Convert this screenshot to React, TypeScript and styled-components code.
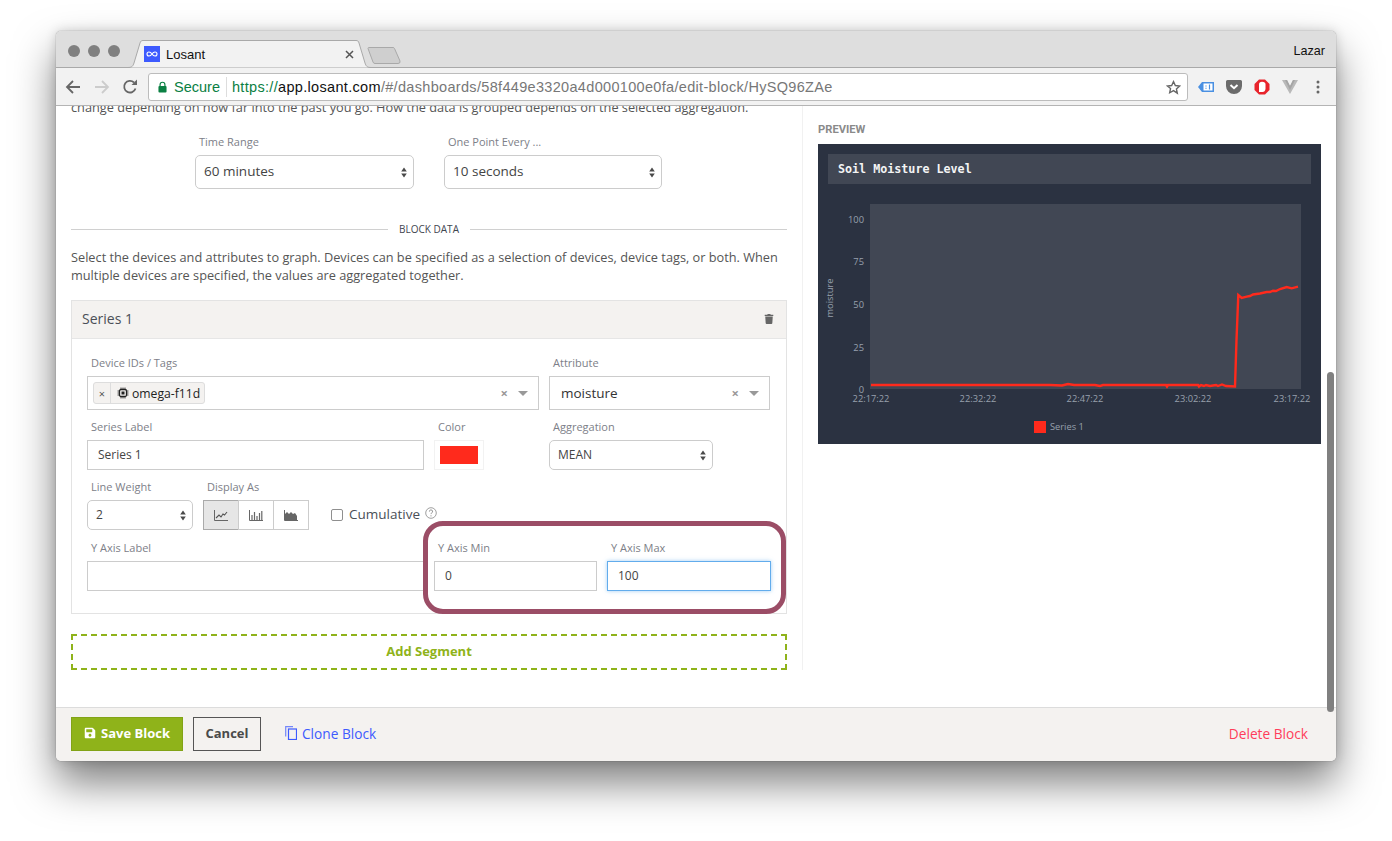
import React from "react";
import styled, { createGlobalStyle } from "styled-components";
import { FaTrash, FaSave } from "react-icons/fa";

const Global = createGlobalStyle`
  html, body { margin: 0; padding: 0; background: #fff; }
  body { font-family: "Open Sans", "Noto Sans", sans-serif; color: #4a4a4a; }
  * { box-sizing: border-box; }
`;

const Desktop = styled.div`
  width: 1392px;
  height: 841px;
  padding: 31px 56px 0;
  overflow: hidden;
  background: #fff;
`;
const Win = styled.div`
  position: relative;
  width: 1280px;
  height: 730px;
  border-radius: 5px;
  display: flex;
  flex-direction: column;
  background: #fff;
  box-shadow: 0 22px 42px rgba(0, 0, 0, 0.5), 0 0 12px rgba(0, 0, 0, 0.16), 0 0 1px rgba(0, 0, 0, 0.6);
`;
const TabBar = styled.div`
  height: 37px;
  flex: none;
  display: flex;
  align-items: flex-end;
  background: #dedede;
  border-radius: 5px 5px 0 0;
  border-bottom: 1px solid #a9a9a9;
  padding-left: 12px;
  position: relative;
`;
const Lights = styled.div`
  display: flex;
  gap: 8px;
  align-self: flex-start;
  margin-top: 14px;
`;
const Light = styled.span`
  width: 12px;
  height: 12px;
  border-radius: 50%;
  background: #808080;
`;
const Tab = styled.div`
  position: relative;
  width: 243px;
  height: 28px;
  margin-left: 8px;
  margin-bottom: -1px;
  display: flex;
  align-items: center;
  padding: 0 0 0 16px;
  font: 13px "Liberation Sans", Arial, sans-serif;
  color: #111;
`;
const TabShape = styled.svg`
  position: absolute;
  left: 0;
  top: 0;
`;
const TabFavicon = styled.svg`
  position: relative;
  margin-right: 6px;
`;
const TabTitle = styled.span`
  position: relative;
  flex: 1;
`;
const TabClose = styled.svg`
  position: relative;
  margin-right: 17px;
`;
const NewTab = styled.svg`
  margin: 0 0 3px -4px;
`;
const UserName = styled.span`
  margin-left: auto;
  align-self: center;
  margin-right: 11px;
  margin-top: 4px;
  font: 12.6px "Liberation Sans", Arial, sans-serif;
  color: #111;
`;
const Toolbar = styled.div`
  height: 38px;
  flex: none;
  display: flex;
  align-items: center;
  background: #f2f2f2;
  border-bottom: 1px solid #b4b4b4;
  padding: 1px 10px 0 9px;
`;
const NavIcon = styled.svg<{ $ml?: number }>`
  flex: none;
  margin-right: 9px;
  margin-left: ${(p) => p.$ml ?? 0}px;
`;
const Omnibox = styled.div`
  width: 1040px;
  height: 28px;
  margin-left: 1px;
  display: flex;
  align-items: center;
  background: #fff;
  border: 1px solid #bcbcbc;
  border-radius: 3px;
  padding: 0 6px 0 9px;
  font: 14.5px "Liberation Sans", Arial, sans-serif;
  color: #777;
  white-space: nowrap;
`;
const Secure = styled.span`
  color: #0b8043;
  margin-left: 7px;
  padding-right: 6px;
  border-right: 1px solid #ddd;
  margin-right: 5px;
  line-height: 20px;
`;
const Url = styled.span`
  letter-spacing: 0.32px;
`;
const Scheme = styled.span`
  color: #0b8043;
`;
const Host = styled.span`
  color: #111;
`;
const Star = styled.svg`
  margin-left: auto;
`;
const ExtRow = styled.div`
  display: flex;
  align-items: center;
  gap: 12px;
  margin-left: 10px;
`;

const Main = styled.div`
  flex: 1;
  min-height: 0;
  display: flex;
  align-items: flex-start;
  overflow: hidden;
`;
const FormCol = styled.div`
  width: 747px;
  flex: none;
  margin-top: -8px;
  padding: 0 15px;
  border-right: 1px solid #f1f1f1;
  font-size: 12.75px;
`;
const Para = styled.p<{ $mt: number }>`
  margin: ${(p) => p.$mt}px 0 0;
  line-height: 18px;
  color: #555;
  font-size: 12.75px;
  font-weight: 500;
  white-space: nowrap;
`;
const Label = styled.div`
  height: 16px;
  line-height: 16px;
  margin-bottom: 5px;
  padding-left: 4px;
  font-size: 11px;
  color: #7d8088;
  font-weight: 500;
  white-space: nowrap;
`;
const TimeRow = styled.div`
  display: flex;
  gap: 30px;
  margin-top: 18px;
  padding-left: 124px;
`;
const Field = styled.div<{ $w: number; $ml?: number }>`
  width: ${(p) => p.$w}px;
  margin-left: ${(p) => p.$ml ?? 0}px;
  flex: none;
`;
const SelectBox = styled.div<{ $h: number; $size: number }>`
  height: ${(p) => p.$h}px;
  display: flex;
  align-items: center;
  justify-content: space-between;
  border: 1px solid #ccc;
  border-radius: 5px;
  padding: 0 5px 0 8px;
  font-size: ${(p) => p.$size}px;
  color: #444;
  background: #fff;
`;
const SelectValue = styled.span`
  padding-bottom: 2px;
`;
const Updown = () => (
  <svg width="8" height="11" viewBox="0 0 8 11">
    <path d="M4 0.5 6.8 4.4H1.2zM4 10.5 1.2 6.6h5.6z" fill="#4a4a4a" />
  </svg>
);
const Divider = styled.div`
  height: 16px;
  margin-top: 32px;
  display: flex;
  align-items: center;
  gap: 11px;
  font-size: 10px;
  color: #3f4650;
  font-weight: 500;
  white-space: nowrap;
  &::before,
  &::after {
    content: "";
    flex: 1;
    height: 1px;
    background: #d0d0d0;
  }
`;
const Card = styled.div`
  position: relative;
  margin-top: 16px;
  border: 1px solid #e3e3e3;
`;
const CardHead = styled.div`
  height: 38px;
  display: flex;
  align-items: center;
  justify-content: space-between;
  padding: 0 12px 2px 10px;
  background: #f4f2f0;
  border-bottom: 1px solid #e6e6e6;
  font-size: 14px;
  font-weight: 500;
  color: #4a4f57;
`;
const CardBody = styled.div`
  padding: 16px 15px 22px;
`;
const Row = styled.div<{ $mt: number }>`
  display: flex;
  margin-top: ${(p) => p.$mt}px;
  align-items: flex-start;
`;
const Combo = styled.div`
  height: 34px;
  display: flex;
  align-items: center;
  border: 1px solid #ccc;
  background: #fff;
  padding: 0 10px 0 5px;
  font-size: 13.5px;
  color: #333;
`;
const Chip = styled.div`
  height: 22px;
  display: flex;
  align-items: center;
  background: #f4f2f0;
  border: 1px solid #ddd;
  border-radius: 3px;
  font-size: 12.2px;
  color: #222;
`;
const ChipX = styled.span`
  width: 17px;
  height: 100%;
  display: flex;
  align-items: center;
  justify-content: center;
  border-right: 1px solid #ddd;
  font-size: 11px;
  color: #555;
`;
const ChipLabel = styled.span`
  display: flex;
  align-items: center;
  gap: 3px;
  padding: 0 4px 0 6px;
`;
const ComboValue = styled.span`
  flex: 1;
  padding-left: 6px;
`;
const ComboClear = styled.span`
  margin-left: auto;
  margin-right: 10px;
  font-size: 13px;
  font-weight: 700;
  color: #999;
  line-height: 1;
`;
const Caret = styled.span`
  width: 0;
  height: 0;
  border-left: 5px solid transparent;
  border-right: 5px solid transparent;
  border-top: 5px solid #999;
`;
const Input = styled.input<{ $focus?: boolean }>`
  display: block;
  width: 100%;
  height: 30px;
  padding: 0 10px 2px;
  font: 500 12px "Open Sans", sans-serif;
  color: #444;
  background: #fff;
  outline: none;
  border: 1px solid ${(p) => (p.$focus ? "#62acec" : "#ccc")};
  box-shadow: ${(p) => (p.$focus ? "0 0 4px rgba(98,172,236,.6)" : "none")};
`;
const SwatchBox = styled.div`
  height: 30px;
  padding: 5px 5px;
  border: 1px solid #f2f2f2;
`;
const Swatch = styled.div`
  height: 18px;
  background: #ff2a1c;
`;
const BtnGroup = styled.div`
  display: flex;
  height: 30px;
`;
const ChartBtn = styled.div<{ $on?: boolean }>`
  width: 36px;
  display: flex;
  align-items: center;
  justify-content: center;
  background: ${(p) => (p.$on ? "#e6e6e6" : "#fff")};
  border: 1px solid ${(p) => (p.$on ? "#aaa" : "#ccc")};
  margin-left: -1px;
  &:first-child {
    margin-left: 0;
  }
`;
const CheckWrap = styled.div`
  margin: 20px 0 0 22px;
  height: 30px;
  display: flex;
  align-items: center;
  font-size: 13.5px;
  color: #4a4f57;
  font-weight: 500;
`;
const CheckBoxMark = styled.span`
  width: 12px;
  height: 12px;
  border: 1px solid #8f8f8f;
  border-radius: 2px;
  margin: 1px 6px 0 0;
  background: #fff;
`;
const HelpIcon = styled.svg`
  margin-left: 5px;
  margin-top: -2px;
`;
const Highlight = styled.div`
  position: absolute;
  left: 351px;
  top: 220px;
  width: 363px;
  height: 93px;
  border: 5px solid #9b4d66;
  border-radius: 20px;
  pointer-events: none;
`;
const AddSegment = styled.div`
  margin-top: 20px;
  height: 36px;
  padding-bottom: 2px;
  display: flex;
  align-items: center;
  justify-content: center;
  border: 2px dashed #8fb31a;
  color: #8fb31a;
  font-size: 13px;
  font-weight: 700;
`;
const PreviewCol = styled.div`
  flex: 1;
  padding: 16px 0 0 15px;
`;
const PreviewLabel = styled.div`
  height: 16px;
  line-height: 16px;
  margin-bottom: 6px;
  font: 700 11.2px/16px "Roboto", sans-serif;
  color: #8a8a8a;
`;
const Tile = styled.div`
  width: 503px;
  height: 300px;
  background: #2b3241;
  padding-top: 10px;
  display: flex;
  flex-direction: column;
`;
const TileTitle = styled.div`
  height: 30px;
  margin: 0 10px;
  padding: 0 0 1px 10px;
  display: flex;
  align-items: center;
  background: #414754;
  font: 700 11.7px "DejaVu Sans Mono", "Liberation Mono", monospace;
  color: #f4f4f4;
`;
const Chart = styled.svg`
  display: block;
`;
const ChartText = styled.text`
  font: 9.3px "Open Sans", sans-serif;
  fill: #98a0ad;
`;
const Footer = styled.div`
  height: 54px;
  flex: none;
  display: flex;
  align-items: flex-start;
  padding: 9px 28px 0 15px;
  background: #f4f2f0;
  border-top: 1px solid #dcdcdc;
  border-radius: 0 0 5px 5px;
`;
const SaveBtn = styled.div`
  width: 112px;
  height: 34px;
  display: flex;
  align-items: center;
  justify-content: center;
  gap: 5px;
  padding-bottom: 2px;
  background: #8fb31a;
  border: 1px solid #82a317;
  color: #fff;
  font-size: 13px;
  font-weight: 700;
`;
const CancelBtn = styled.div`
  width: 68px;
  height: 34px;
  margin-left: 10px;
  padding-bottom: 2px;
  display: flex;
  align-items: center;
  justify-content: center;
  border: 1px solid #555;
  color: #4a4a4a;
  font-size: 13px;
  font-weight: 700;
`;
const CloneLink = styled.div`
  height: 34px;
  margin-left: 24px;
  padding-bottom: 2px;
  display: flex;
  align-items: center;
  gap: 5px;
  color: #3d5afe;
  font-size: 13.7px;
  font-weight: 500;
`;
const DeleteLink = styled.div`
  height: 34px;
  margin-left: auto;
  padding-bottom: 2px;
  display: flex;
  align-items: center;
  color: #ff3d5a;
  font-size: 13.7px;
  font-weight: 500;
`;
const Scrollbar = styled.div`
  position: absolute;
  right: 2px;
  top: 341px;
  width: 7px;
  height: 340px;
  border-radius: 4px;
  background: #808080;
`;

const linePts =
  "871,385 900,385 950,385 1000,385 1050,385 1062,385.5 1068,384 1074,385 1095,385 1100,386 1103,385 1166,385 1167,386.5 1168,385 1187,385 1198,385 1199,386.5 1201,385 1204,386 1206,385 1210,386 1213,385.5 1216,385 1218,386 1222,384.5 1226,386 1235,386.5 1236.5,340 1238.3,295 1241.7,298 1246.7,296.7 1250,296 1253,294.5 1260,293.5 1266.7,292 1270,292 1273,290.7 1276,291 1280,289 1286.7,287 1291.7,288.3 1298,286.7";

const IconChip = () => (
  <svg width="12" height="12" viewBox="0 0 12 12">
    <rect x="2.5" y="2.5" width="7" height="7" rx="1.5" fill="none" stroke="#222" strokeWidth="1.3" />
    <rect x="4.5" y="4.5" width="3" height="3" fill="#222" />
    <path d="M4 .5v1.5M6 .5v1.5M8 .5v1.5M4 10v1.5M6 10v1.5M8 10v1.5M.5 4H2M.5 6H2M.5 8H2M10 4h1.5M10 6h1.5M10 8h1.5" stroke="#222" strokeWidth=".8" />
  </svg>
);

export default function App() {
  return (
    <>
      <Global />
      <Desktop>
        <Win>
          <TabBar>
            <Lights>
              <Light />
              <Light />
              <Light />
            </Lights>
            <Tab>
              <TabShape width="243" height="28" viewBox="0 0 243 28">
                <path d="M0 27.5C4 27.5 5 26 6 23L12 3C12.6 1 13.5.5 15 .5H228C229.6.5 230.5 1 231 3L237 23C238 26 239 27.5 243 27.5" fill="#f2f2f2" stroke="#a9a9a9" />
              </TabShape>
              <TabFavicon width="16" height="16" viewBox="0 0 16 16">
                <rect width="16" height="16" fill="#3d5afe" />
                <path d="M8 8C7 6.5 6 6 5 6a2 2 0 0 0 0 4c1 0 2-.5 3-2s2-2 3-2a2 2 0 0 1 0 4c-1 0-2-.5-3-2z" fill="none" stroke="#fff" strokeWidth="1.1" />
              </TabFavicon>
              <TabTitle>Losant</TabTitle>
              <TabClose width="9" height="9" viewBox="0 0 9 9">
                <path d="M1 1l7 7M8 1L1 8" stroke="#555" strokeWidth="1.5" />
              </TabClose>
            </Tab>
            <NewTab width="34" height="17" viewBox="0 0 34 17">
              <path d="M1 1.5Q1 .5 2 .5H26Q27 .5 27.5 1.5L33 14Q33.5 16.5 31 16.5H8Q6.5 16.5 6 15z" fill="#cfcfcf" stroke="#a9a9a9" />
            </NewTab>
            <UserName>Lazar</UserName>
          </TabBar>
          <Toolbar>
            <NavIcon width="16" height="16" viewBox="0 0 16 16">
              <path d="M15 8H2M8 2 2 8l6 6" fill="none" stroke="#666" strokeWidth="1.8" />
            </NavIcon>
            <NavIcon $ml={4} width="16" height="16" viewBox="0 0 16 16">
              <path d="M1 8h13M8 2l6 6-6 6" fill="none" stroke="#ccc" strokeWidth="1.8" />
            </NavIcon>
            <NavIcon $ml={3} width="16" height="16" viewBox="0 0 16 16">
              <path d="M13.5 9.5A5.8 5.8 0 1 1 12 3.5" fill="none" stroke="#666" strokeWidth="1.8" />
              <path d="M9.5 6H15V.5z" fill="#666" />
            </NavIcon>
            <Omnibox>
              <svg width="9" height="12" viewBox="0 0 10 12">
                <path d="M2.3 5V3.4a2.7 2.7 0 0 1 5.4 0V5" fill="none" stroke="#0b8043" strokeWidth="1.3" />
                <rect x=".5" y="5" width="9" height="7" rx="1" fill="#0b8043" />
              </svg>
              <Secure>Secure</Secure>
              <Url>
                <Scheme>https://</Scheme>
                <Host>app.losant.com</Host>
                /#/dashboards/58f449e3320a4d000100e0fa/edit-block/HySQ96ZAe
              </Url>
              <Star width="15" height="15" viewBox="0 0 24 24">
                <path d="M12 2.5l2.9 6.3 6.9.8-5.1 4.7 1.4 6.8L12 16.9l-6.1 3.5 1.4-6.8L2.2 9.6l6.9-.8z" fill="none" stroke="#666" strokeWidth="2.2" />
              </Star>
            </Omnibox>
            <ExtRow>
              <svg width="16" height="12" viewBox="0 0 16 12">
                <path d="M0 6l4-5h12v10H4z" fill="#4a90e2" />
                <rect x="5.5" y="2.5" width="9" height="7" fill="#fff" />
                <path d="M8 4.5v1M8 6.8v1M11.5 3.5v5" stroke="#4a90e2" strokeWidth="1.2" />
              </svg>
              <svg width="16" height="14" viewBox="0 0 16 14">
                <path d="M1.5 0h13A1.5 1.5 0 0 1 16 1.5V6a8 8 0 0 1-16 0V1.5A1.5 1.5 0 0 1 1.5 0z" fill="#6b6b6b" />
                <path d="M4.5 5 8 8.2 11.5 5" fill="none" stroke="#fff" strokeWidth="2" />
              </svg>
              <svg width="16" height="16" viewBox="0 0 16 16">
                <path d="M5 .5h6L15.5 5v6L11 15.5H5L.5 11V5z" fill="#e8242c" />
                <path d="M5 13V5.5Q5 3 8 2.8 11.5 3 11.5 5.5V10Q11 13 8.5 13z" fill="#fff" />
              </svg>
              <svg width="16" height="14" viewBox="0 0 16 14">
                <path d="M0 0h5l3 6 3-6h5L8 14z" fill="#b9b9b9" />
                <path d="M5 0l3 6 3-6 2 0L8 10 3 0z" fill="#a5a5a5" />
              </svg>
              <svg width="16" height="14" viewBox="0 0 16 14">
                <circle cx="8" cy="2" r="1.5" fill="#666" />
                <circle cx="8" cy="7" r="1.5" fill="#666" />
                <circle cx="8" cy="12" r="1.5" fill="#666" />
              </svg>
            </ExtRow>
          </Toolbar>
          <Main>
            <FormCol>
              <Para $mt={0}>
                change depending on how far into the past you go. How the data is grouped depends on the selected aggregation.
              </Para>
              <TimeRow>
                <Field $w={219}>
                  <Label>Time Range</Label>
                  <SelectBox $h={34} $size={13.5}>
                    <SelectValue>60 minutes</SelectValue>
                    <Updown />
                  </SelectBox>
                </Field>
                <Field $w={218}>
                  <Label>One Point Every ...</Label>
                  <SelectBox $h={34} $size={13.5}>
                    <SelectValue>10 seconds</SelectValue>
                    <Updown />
                  </SelectBox>
                </Field>
              </TimeRow>
              <Divider>BLOCK DATA</Divider>
              <Para $mt={11}>
                Select the devices and attributes to graph. Devices can be specified as a selection of devices, device tags, or both. When
                <br />
                multiple devices are specified, the values are aggregated together.
              </Para>
              <Card>
                <CardHead>
                  Series 1
                  <FaTrash size={10} color="#666" />
                </CardHead>
                <CardBody>
                  <Row $mt={0}>
                    <Field $w={452}>
                      <Label>Device IDs / Tags</Label>
                      <Combo>
                        <Chip>
                          <ChipX>×</ChipX>
                          <ChipLabel>
                            <IconChip />
                            omega-f11d
                          </ChipLabel>
                        </Chip>
                        <ComboClear>×</ComboClear>
                        <Caret />
                      </Combo>
                    </Field>
                    <Field $w={221} $ml={10}>
                      <Label>Attribute</Label>
                      <Combo>
                        <ComboValue>moisture</ComboValue>
                        <ComboClear>×</ComboClear>
                        <Caret />
                      </Combo>
                    </Field>
                  </Row>
                  <Row $mt={9}>
                    <Field $w={337}>
                      <Label>Series Label</Label>
                      <Input readOnly defaultValue="Series 1" />
                    </Field>
                    <Field $w={50} $ml={10}>
                      <Label>Color</Label>
                      <SwatchBox>
                        <Swatch />
                      </SwatchBox>
                    </Field>
                    <Field $w={164} $ml={65}>
                      <Label>Aggregation</Label>
                      <SelectBox $h={30} $size={12}>
                        <SelectValue>MEAN</SelectValue>
                        <Updown />
                      </SelectBox>
                    </Field>
                  </Row>
                  <Row $mt={9}>
                    <Field $w={106}>
                      <Label>Line Weight</Label>
                      <SelectBox $h={30} $size={12}>
                        <SelectValue>2</SelectValue>
                        <Updown />
                      </SelectBox>
                    </Field>
                    <Field $w={106} $ml={10}>
                      <Label>Display As</Label>
                      <BtnGroup>
                        <ChartBtn $on>
                          <svg width="14" height="11" viewBox="0 0 14 11">
                            <path d="M.5 0v10.5H14" fill="none" stroke="#666" />
                            <path d="M2 8l3-3 2 2 2-3 1.5 1L13 2" fill="none" stroke="#555" strokeWidth="1.1" />
                          </svg>
                        </ChartBtn>
                        <ChartBtn>
                          <svg width="14" height="11" viewBox="0 0 14 11">
                            <path d="M.5 0v10.5H14" fill="none" stroke="#666" />
                            <path d="M3 10V5M5.5 10V2M8 10V6M10.5 10V3M12.8 10V1" stroke="#666" strokeWidth="1.2" />
                          </svg>
                        </ChartBtn>
                        <ChartBtn>
                          <svg width="14" height="11" viewBox="0 0 14 11">
                            <path d="M.5 0v10.5H14" fill="none" stroke="#666" />
                            <path d="M1 10V4l2-2 2 2 2-2 2 2 2-1 2 3v4z" fill="#666" />
                          </svg>
                        </ChartBtn>
                      </BtnGroup>
                    </Field>
                    <CheckWrap>
                      <CheckBoxMark />
                      Cumulative
                      <HelpIcon width="12" height="12" viewBox="0 0 12 12">
                        <circle cx="6" cy="6" r="5.3" fill="none" stroke="#888" strokeWidth=".8" />
                        <path d="M4.4 4.6A1.6 1.6 0 1 1 6.6 6c-.5.3-.6.5-.6 1.1" fill="none" stroke="#888" strokeWidth=".9" />
                        <circle cx="6" cy="8.8" r=".6" fill="#888" />
                      </HelpIcon>
                    </CheckWrap>
                  </Row>
                  <Row $mt={10}>
                    <Field $w={337}>
                      <Label>Y Axis Label</Label>
                      <Input readOnly defaultValue="" />
                    </Field>
                    <Field $w={163} $ml={10}>
                      <Label>Y Axis Min</Label>
                      <Input readOnly defaultValue="0" />
                    </Field>
                    <Field $w={164} $ml={10}>
                      <Label>Y Axis Max</Label>
                      <Input readOnly defaultValue="100" $focus />
                    </Field>
                  </Row>
                </CardBody>
                <Highlight />
              </Card>
              <AddSegment>Add Segment</AddSegment>
            </FormCol>
            <PreviewCol>
              <PreviewLabel>PREVIEW</PreviewLabel>
              <Tile>
                <TileTitle>Soil Moisture Level</TileTitle>
                <Chart width="503" height="260" viewBox="818 184 503 260">
                  <rect x="870" y="204" width="431" height="185" fill="#414754" />
                  {[
                    ["100", 223],
                    ["75", 265],
                    ["50", 308],
                    ["25", 351],
                    ["0", 393],
                  ].map(([t, y]) => (
                    <ChartText key={t} x="864" y={y} textAnchor="end">
                      {t}
                    </ChartText>
                  ))}
                  <ChartText x="0" y="0" textAnchor="middle" transform="translate(833 298) rotate(-90)">
                    moisture
                  </ChartText>
                  {[
                    ["22:17:22", 871],
                    ["22:32:22", 978],
                    ["22:47:22", 1085],
                    ["23:02:22", 1193],
                    ["23:17:22", 1292],
                  ].map(([t, x]) => (
                    <ChartText key={t} x={x} y="402" textAnchor="middle">
                      {t}
                    </ChartText>
                  ))}
                  <polyline points={linePts} fill="none" stroke="#ff2a1c" strokeWidth="2.4" />
                  <rect x="1034" y="421" width="12" height="12" fill="#ff2a1c" />
                  <ChartText x="1050" y="430">Series 1</ChartText>
                </Chart>
              </Tile>
            </PreviewCol>
          </Main>
          <Footer>
            <SaveBtn>
              <FaSave size={12} />
              Save Block
            </SaveBtn>
            <CancelBtn>Cancel</CancelBtn>
            <CloneLink>
              <svg width="12" height="14" viewBox="0 0 12 14">
                <path d="M.7 10.5V.7H8" fill="none" stroke="#3d5afe" strokeWidth="1.2" opacity=".7" />
                <rect x="3.5" y="3" width="8" height="10.5" fill="none" stroke="#3d5afe" strokeWidth="1.2" />
              </svg>
              Clone Block
            </CloneLink>
            <DeleteLink>Delete Block</DeleteLink>
          </Footer>
          <Scrollbar />
        </Win>
      </Desktop>
    </>
  );
}
